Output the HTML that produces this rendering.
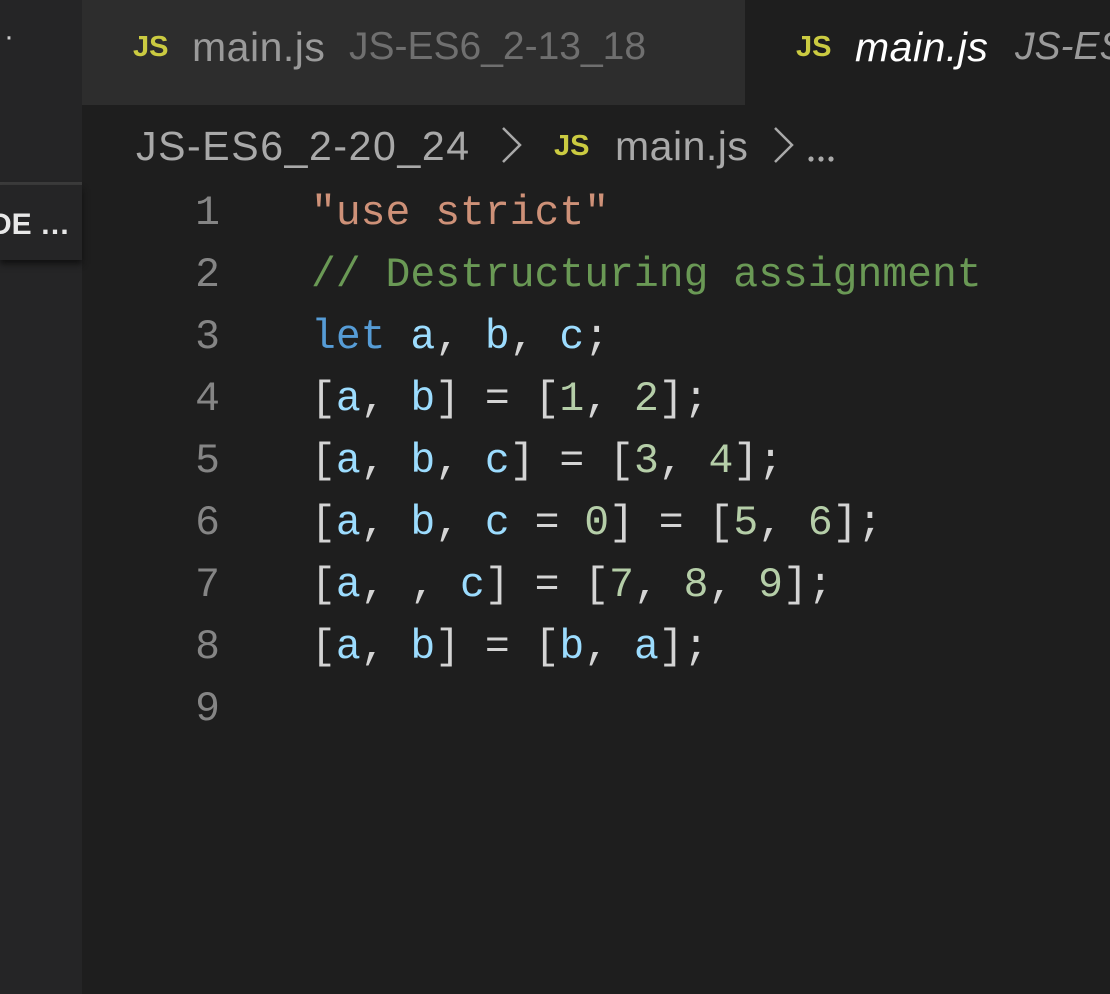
<!DOCTYPE html>
<html><head><meta charset="utf-8"><style>
html,body{margin:0;width:1110px;height:994px;overflow:hidden}
body{background:#1e1e1e;position:relative;font-family:"Liberation Sans",sans-serif}
.side{position:absolute;left:0;top:0;width:82px;height:994px;background:#252526}
.sep{position:absolute;left:0;top:182px;width:82px;height:3px;background:#3c3c3c}
.box{position:absolute;left:0;top:185px;width:82px;height:75px;background:#252526;box-shadow:0 4px 6px #111;color:#e8e8e8;font-weight:bold;font-size:30px;line-height:80px;white-space:nowrap;overflow:hidden}
.tab1{position:absolute;left:82px;top:0;width:663px;height:105px;background:#2d2d2d}
.t{position:absolute;white-space:nowrap;font-size:41px}
.js{color:#cbcb41;font-weight:bold;font-size:29px}
.mono{font-family:"Liberation Mono",monospace;font-size:41.4px;position:absolute;white-space:pre;line-height:62px}
.s{color:#ce9178}.c{color:#6a9955}.k{color:#569cd6}.v{color:#9cdcfe}.n{color:#b5cea8}.p{color:#d4d4d4}
</style></head><body>
<div class="side"></div>
<div class="t" style="left:4px;top:20px;color:#ccc;font-size:30px">·</div>
<div class="sep"></div>
<div class="box"><span style="margin-left:-10px">DE …</span></div>
<div class="tab1"></div>
<div class="t js" style="left:133px;top:31px">JS</div>
<div class="t" style="left:192px;top:24px;color:#9a9a9a;letter-spacing:0.5px">main.js</div>
<div class="t" style="left:349px;top:25px;color:#6f6f6f;font-size:39px">JS-ES6_2-13_18</div>
<div class="t js" style="left:796px;top:31px">JS</div>
<div class="t" style="left:855px;top:24px;color:#fff;font-style:italic;letter-spacing:0.5px">main.js</div>
<div class="t" style="left:1015px;top:25px;color:#9a9a9a;font-size:39px;font-style:italic">JS-ES6_2-20_24</div>
<div class="t" style="left:136px;top:123px;color:#a9a9a9;letter-spacing:1.6px">JS-ES6_2-20_24</div>
<svg style="position:absolute;left:0;top:0" width="1110" height="200"><g fill="none" stroke="#a9a9a9" stroke-width="2.5"><path d="M503 128 L520 145 L503 162"/><path d="M775 128 L792 145 L775 162"/></g><g fill="#a9a9a9"><circle cx="811" cy="159" r="2.6"/><circle cx="821" cy="159" r="2.6"/><circle cx="831" cy="159" r="2.6"/></g></svg>
<div class="t js" style="left:554px;top:130px">JS</div>
<div class="t" style="left:615px;top:123px;color:#a9a9a9;letter-spacing:0.5px">main.js</div>
<div class="mono" style="left:186px;top:183px;color:#858585;text-align:right;width:34px">1
2
3
4
5
6
7
8
9</div>
<div class="mono p" style="left:311px;top:183px"><span class="s">"use strict"</span>
<span class="c">// Destructuring assignment</span>
<span class="k">let</span> <span class="v">a</span>, <span class="v">b</span>, <span class="v">c</span>;
[<span class="v">a</span>, <span class="v">b</span>] = [<span class="n">1</span>, <span class="n">2</span>];
[<span class="v">a</span>, <span class="v">b</span>, <span class="v">c</span>] = [<span class="n">3</span>, <span class="n">4</span>];
[<span class="v">a</span>, <span class="v">b</span>, <span class="v">c</span> = <span class="n">0</span>] = [<span class="n">5</span>, <span class="n">6</span>];
[<span class="v">a</span>, , <span class="v">c</span>] = [<span class="n">7</span>, <span class="n">8</span>, <span class="n">9</span>];
[<span class="v">a</span>, <span class="v">b</span>] = [<span class="v">b</span>, <span class="v">a</span>];
</div>
</body></html>
